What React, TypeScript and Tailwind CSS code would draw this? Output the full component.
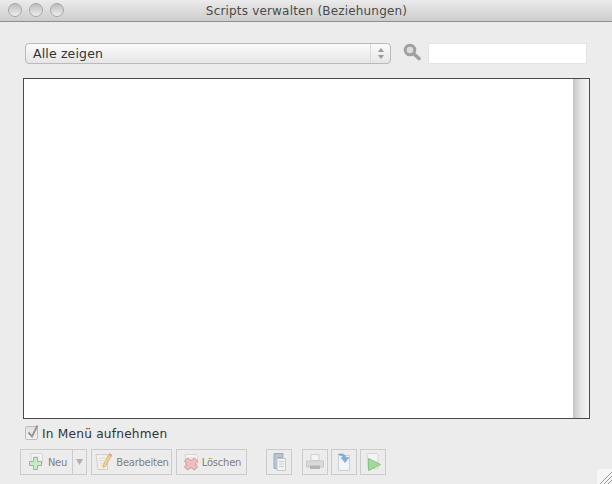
import { ReactNode } from 'react'

function ToolButton({ className, children }: { className: string; children: ReactNode }) {
  return (
    <div className={`flex h-[26px] items-center justify-center border border-[#cbcbcb] bg-[#ececec] ${className}`}>
      {children}
    </div>
  )
}

function PlusIcon() {
  return (
    <svg className="opacity-80" width="22" height="20" viewBox="0 0 22 20">
      <path d="M4 1.500h11l1.500 1v9H5V3z" fill="#f7f7f7" stroke="#d2d2d2" />
      <path d="M7.500 4.500h6M7.500 7h6" stroke="#e0e0e0" />
      <path d="M6.500 6.500h4v4h4v4h-4v4h-4v-4h-4v-4h4z" transform="translate(1 -1)" fill="#bdecb8" stroke="#6fbb6e" />
    </svg>
  )
}

function PencilIcon() {
  return (
    <svg className="opacity-80" width="20" height="20" viewBox="0 0 20 20">
      <path d="M2 2.500h11.500v15H4z" fill="#f4f2e6" stroke="#c9c9c9" />
      <path d="M5 6h7M5 8.500h6M5.500 11h5M6 13.500h4" stroke="#d6d6d6" />
      <path d="M15.500 1.500l2.500 1.500-6.500 11.500-2.500 1 .2-2.600z" fill="#f1c77a" stroke="#d59f4a" strokeWidth="0.700" />
      <path d="M15.500 1.500l2.500 1.500-1 1.600-2.400-1.500z" fill="#e58f8f" />
    </svg>
  )
}

function CrossIcon() {
  return (
    <svg className="opacity-85" width="20" height="20" viewBox="0 0 20 20">
      <path d="M3 2.500h11l1.500 1v9H4z" fill="#f7f7f7" stroke="#d2d2d2" />
      <path d="M6 5.500h7M6 8h7" stroke="#e0e0e0" />
      <path d="M5.500 7.500l3.500 2.500 3.500-2.500 3 3-2.500 3 2.500 3-3 3-3.500-2.500-3.500 2.500-3-3 2.500-3-2.500-3z" transform="translate(0 -1.500)" fill="#f0b8b8" stroke="#d48484" />
    </svg>
  )
}

export default function App() {
  return (
    <div className="relative flex h-[484px] w-[612px] flex-col overflow-hidden bg-[#ececec] font-['DejaVu_Sans',sans-serif]">
      {/* title bar */}
      <div className="relative flex h-[22px] shrink-0 items-center justify-center border-b border-[#8e8e8e] bg-gradient-to-b from-[#ebebeb] to-[#cdcdcd]">
        <div className="absolute left-[8px] top-[3px] flex gap-[7px]">
          <div className="h-[14px] w-[14px] rounded-full border border-[#a6a6a6] bg-gradient-to-b from-[#bdbdbd] to-[#eeeeee]" />
          <div className="h-[14px] w-[14px] rounded-full border border-[#a6a6a6] bg-gradient-to-b from-[#bdbdbd] to-[#eeeeee]" />
          <div className="h-[14px] w-[14px] rounded-full border border-[#a6a6a6] bg-gradient-to-b from-[#bdbdbd] to-[#eeeeee]" />
        </div>
        <span className="pl-[1px] text-[12px] tracking-[0.18px] text-[#4a4a4a]">Scripts verwalten (Beziehungen)</span>
      </div>

      {/* filter row */}
      <div className="mt-[21px] flex h-[21px] shrink-0 items-center pl-[25px]">
        <div className="flex h-[21px] w-[366px] items-center rounded-[4px] border border-[#bababa] bg-gradient-to-b from-[#fbfbfb] via-[#f0f0f0] to-[#e6e6e6]">
          <span className="flex-1 pl-[7px] pt-[1px] text-[12.5px] tracking-[0.15px] text-[#333333]">Alle zeigen</span>
          <div className="flex h-full w-[20px] flex-col items-center justify-center gap-[3px] border-l border-[#dadada]">
            <svg width="6" height="4" viewBox="0 0 6 4"><path d="M3 0l3 4H0z" fill="#9a9a9a" /></svg>
            <svg width="6" height="4" viewBox="0 0 6 4"><path d="M0 0h6L3 4z" fill="#9a9a9a" /></svg>
          </div>
        </div>
        <svg className="mb-[4px] ml-[12px]" width="18" height="18" viewBox="0 0 18 18">
          <circle cx="7" cy="7" r="4.800" fill="#dcdcdc" stroke="#a0a0a0" strokeWidth="3" />
          <path d="M11 11l5 4.500" stroke="#a0a0a0" strokeWidth="3.600" strokeLinecap="round" />
        </svg>
        <div className="ml-[7px] h-[21px] w-[159px] border border-[#e4e4e4] bg-white" />
      </div>

      {/* script list */}
      <div className="ml-[23px] mt-[14px] flex h-[341px] w-[567px] shrink-0 justify-end border border-[#4a4a4a] bg-white">
        <div className="w-[16px] bg-gradient-to-r from-[#c4c4c4] via-[#e6e6e6] to-[#f4f4f4]" />
      </div>

      {/* include in menu */}
      <div className="mt-[6px] flex h-[16px] shrink-0 items-center pl-[25px]">
        <div className="relative h-[14px] w-[13px] rounded-[2px] border border-[#bdbdbd] bg-gradient-to-b from-[#e0e0e0] to-[#f2f2f2]">
          <svg className="absolute -top-[3px] left-0" width="15" height="16" viewBox="0 0 15 16">
            <path d="M2.500 8.500l3.500 4L11.500 1.500" fill="none" stroke="#999999" strokeWidth="2" />
          </svg>
        </div>
        <span className="ml-[4px] mt-[2px] text-[12.2px] tracking-[0.2px] text-[#333333]">In Menü aufnehmen</span>
      </div>

      {/* toolbar */}
      <div className="mt-[8px] flex shrink-0 pl-[20px]">
        <ToolButton className="w-[53px] text-[10px] tracking-[-0.25px] text-[#808080]">
          <PlusIcon />
          <span>Neu</span>
        </ToolButton>
        <ToolButton className="w-[14px] border-l-0">
          <svg width="7" height="6" viewBox="0 0 7 6"><path d="M0 0h7L3.500 6z" fill="#b0b0b0" /></svg>
        </ToolButton>
        <ToolButton className="ml-[4px] w-[81px] gap-[2px] text-[10px] tracking-[-0.25px] text-[#808080]">
          <PencilIcon />
          <span>Bearbeiten</span>
        </ToolButton>
        <ToolButton className="ml-[4px] w-[71px] text-[10px] tracking-[-0.25px] text-[#808080]">
          <CrossIcon />
          <span>Löschen</span>
        </ToolButton>
        <ToolButton className="ml-[19px] w-[26px]">
          <svg className="opacity-80" width="18" height="20" viewBox="0 0 18 20">
            <path d="M4 1.500h9v4H8v11H4z" fill="#a9bccb" stroke="#8a9cab" />
            <path d="M7 6.500h8.500v12H7z" fill="#f6f6f6" stroke="#bdbdbd" />
            <path d="M9 9.500h5M9 12h5M9 14.500h5" stroke="#c4c4c4" />
          </svg>
        </ToolButton>
        <ToolButton className="ml-[10px] w-[26px]">
          <svg className="opacity-75" width="20" height="18" viewBox="0 0 20 18">
            <path d="M6 1.500h8v6H6z" fill="#f8f8f8" stroke="#c6c6c6" />
            <path d="M1.500 8h17v6h-17z" fill="#d4d4d4" stroke="#bbbbbb" />
            <path d="M5 12.500h10v3.500H5z" fill="#a0a0a0" />
          </svg>
        </ToolButton>
        <ToolButton className="ml-[3px] w-[26px]">
          <svg className="opacity-85" width="18" height="20" viewBox="0 0 18 20">
            <path d="M3.500 3.500h11v15h-11z" fill="#f4f7fa" stroke="#c4ccd4" />
            <path d="M3 2.500c4-1.500 7-.5 8 3h3l-4 5-4-5h2.500C8 4 6 3 3 2.500z" fill="#6fa6dc" stroke="#5c90c4" strokeWidth="0.500" />
          </svg>
        </ToolButton>
        <ToolButton className="ml-[3px] w-[26px]">
          <svg className="opacity-85" width="20" height="20" viewBox="0 0 20 20">
            <path d="M4 1.500h10l1 1v14H5z" fill="#f6f6f6" stroke="#d2d2d2" />
            <path d="M5.500 6.500l12 6-12 6z" fill="#93d98c" stroke="#75bd70" />
          </svg>
        </ToolButton>
      </div>

      {/* resize grip */}
      <svg className="absolute bottom-0 right-0" width="15" height="15" viewBox="0 0 15 15">
        <path d="M0 0h15v15H0z" fill="#f6f6f6" />
        <path d="M3 15L15 3M7 15l8-8M11 15l4-4" stroke="#9a9a9a" strokeWidth="1" />
      </svg>
    </div>
  )
}
